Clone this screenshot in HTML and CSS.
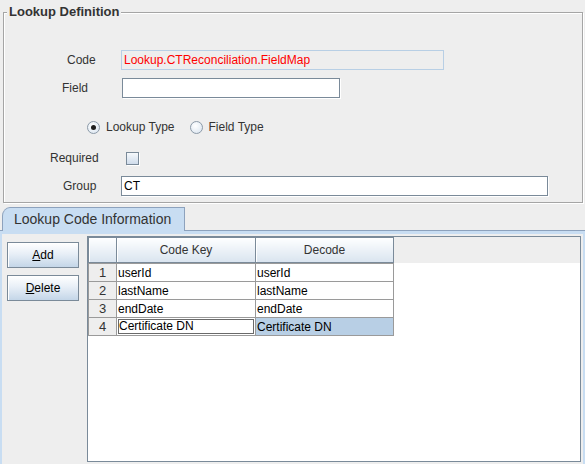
FILE: index.html
```html
<!DOCTYPE html>
<html>
<head>
<meta charset="utf-8">
<title>Lookup Definition</title>
<link rel="stylesheet" href="styles.css">
</head>
<body>
<fieldset class="group">
  <legend>Lookup Definition</legend>
  <div class="row r-code"><span class="lbl lbl-code">Code</span><input class="tf tf-code" value="Lookup.CTReconciliation.FieldMap" readonly></div>
  <div class="row r-field"><span class="lbl lbl-field">Field</span><input class="tf tf-field" value=""></div>
  <div class="row r-radio">
    <label class="opt"><span class="radio on"></span>Lookup Type</label>
    <label class="opt"><span class="radio"></span>Field Type</label>
  </div>
  <div class="row r-req"><span class="lbl lbl-req">Required</span><span class="check"></span></div>
  <div class="row r-group"><span class="lbl lbl-group">Group</span><input class="tf tf-group" value="CT"></div>
</fieldset>
<div class="tabstrip"><div class="tab">Lookup Code Information</div></div>
<div class="tabbody">
  <div class="buttons">
    <button class="btn"><u>A</u>dd</button>
    <button class="btn"><u>D</u>elete</button>
  </div>
  <div class="scroll">
    <div class="colheader">
      <table class="grid">
        <colgroup><col class="c-num"><col class="c-key"><col class="c-dec"></colgroup>
        <tr class="hrow"><th></th><th>Code Key</th><th>Decode</th></tr>
      </table>
    </div>
    <div class="viewport">
      <table class="grid">
        <colgroup><col class="c-num"><col class="c-key"><col class="c-dec"></colgroup>
        <tr><td class="num">1</td><td>userId</td><td>userId</td></tr>
        <tr><td class="num">2</td><td>lastName</td><td>lastName</td></tr>
        <tr><td class="num">3</td><td>endDate</td><td>endDate</td></tr>
        <tr><td class="num">4</td><td class="focus"><span>Certificate DN</span></td><td class="sel">Certificate DN</td></tr>
      </table>
    </div>
  </div>
</div>
</body>
</html>
```
FILE: styles.css
```css
html, body {
  margin: 0;
  padding: 0;
}
body {
  width: 585px;
  height: 464px;
  overflow: hidden;
  background: #eeeeee;
  font-family: "Liberation Sans", Arial, sans-serif;
  font-size: 12px;
  color: #333333;
  display: flex;
  flex-direction: column;
}

/* ---------- titled group ---------- */
.group {
  margin: 5px 2px 0 3px;
  padding: 0 0 6px 0;
  border: 1px solid #a5a5a5;
  box-shadow: inset 1px 1px 0 #ffffff, 1px 1px 0 #ffffff;
  min-width: 0;
  flex: none;
}
.group legend {
  font-weight: bold;
  font-size: 13px;
  line-height: 14px;
  margin-left: 3px;
  padding: 0 2px;
  background: #eeeeee;
  color: #333333;
}
.row {
  display: flex;
  align-items: center;
  height: 20px;
}
.r-code { margin-top: 31px; }
.r-field { margin-top: 8px; }
.r-radio { margin-top: 19px; padding-left: 83px; }
.r-req { margin-top: 11px; }
.r-group { margin-top: 8px; }

.lbl {
  flex: none;
  width: 117px;
  box-sizing: border-box;
  color: #333333;
}
.lbl-code { padding-left: 63px; }
.lbl-field { padding-left: 58px; width: 118px; }
.lbl-req { padding-left: 46px; width: 122px; }
.lbl-group { padding-left: 59px; }

.tf {
  box-sizing: border-box;
  height: 20px;
  margin: 0;
  padding: 0 2px;
  border: 1px solid #7a8a99;
  box-shadow: 1px 1px 0 #ffffff;
  background: #ffffff;
  font-family: "Liberation Sans", Arial, sans-serif;
  font-size: 12px;
  color: #000000;
  outline: none;
}
.tf-code {
  width: 323px;
  background: #eeeeee;
  border-color: #b8cfe5;
  box-shadow: none;
  color: #ff0000;
}
.tf-field { width: 218px; }
.tf-group { width: 427px; }

.opt {
  display: flex;
  align-items: center;
  gap: 6px;
  color: #333333;
}
.opt + .opt { margin-left: 15px; }
.radio {
  position: relative;
  width: 13px;
  height: 13px;
  box-sizing: border-box;
  border-radius: 50%;
  border: 1px solid #8c9aa8;
  background: radial-gradient(circle at 40% 35%, #ffffff 0%, #d6e2ee 100%);
}
.radio.on::after {
  content: "";
  position: absolute;
  left: 3px;
  top: 3px;
  width: 5px;
  height: 5px;
  border-radius: 50%;
  background: #1e1e1e;
}
.check {
  width: 13px;
  height: 13px;
  box-sizing: border-box;
  border: 1px solid #7a8a99;
  background: linear-gradient(#f6f9fc, #cfdceb);
  box-shadow: 1px 1px 0 #ffffff;
}

/* ---------- tabs ---------- */
.tabstrip {
  flex: none;
  display: flex;
  height: 23px;
  margin-top: 4px;
  padding-left: 2px;
  border-bottom: 1px solid #8da2bd;
}
.tab {
  box-sizing: border-box;
  width: 183px;
  height: 24px;
  margin-bottom: -1px;
  padding-left: 11px;
  border: 1px solid #8da2bd;
  border-bottom: none;
  border-top-left-radius: 8px 9px;
  background: #c8ddf2;
  font-size: 14px;
  line-height: 23px;
  color: #333333;
  white-space: nowrap;
}
.tabbody {
  flex: 1;
  min-height: 0;
  display: flex;
  border-top: 3px solid #c8ddf2;
  border-left: 2px solid #c8ddf2;
  border-right: 2px solid #c8ddf2;
  padding: 2px 2px 2px 5px;
}
.buttons {
  flex: none;
  display: flex;
  flex-direction: column;
  gap: 7px;
  width: 72px;
  margin-top: 6px;
  margin-right: 8px;
}
.btn {
  box-sizing: border-box;
  width: 72px;
  height: 26px;
  padding: 0;
  border: 1px solid #7a8a99;
  background: linear-gradient(#ffffff 0%, #e8eff7 45%, #c4d6e8 100%);
  box-shadow: inset 1px 1px 0 #ffffff;
  font-family: "Liberation Sans", Arial, sans-serif;
  font-size: 12px;
  color: #000000;
}

/* ---------- table ---------- */
.scroll {
  flex: 1;
  min-width: 0;
  display: flex;
  flex-direction: column;
  border: 1px solid #7a8a99;
  background: #ffffff;
}
.colheader {
  flex: none;
  background: #eeeeee;
}
.viewport {
  flex: 1;
  background: #ffffff;
}
.grid {
  border-collapse: collapse;
  table-layout: fixed;
  width: 305px;
}
.c-num { width: 28px; }
.c-key { width: 139px; }
.c-dec { width: 138px; }
.hrow { height: 25px; }
.grid th {
  padding: 0;
  border: 1px solid #7a8a99;
  background: linear-gradient(#fdfeff, #d9e4ef);
  box-shadow: inset 1px 1px 0 #ffffff;
  font-weight: normal;
  font-size: 12px;
  color: #333333;
  text-align: center;
}
.grid td {
  height: 17px;
  padding: 0 0 0 1px;
  border: 1px solid #9a9a9a;
  background: #ffffff;
  color: #000000;
  white-space: nowrap;
  overflow: hidden;
  line-height: 14px;
}
.grid td.num {
  padding: 0;
  background: #eeeeee;
  text-align: center;
  font-size: 13px;
  color: #333333;
}
.grid td.sel { background: #b8cfe5; }
.grid td.focus { padding: 0; }
.grid td.focus span {
  display: block;
  height: 15px;
  margin: 0 1px;
  border: 1px solid #6a6a6a;
  box-sizing: border-box;
  line-height: 13px;
}
```
